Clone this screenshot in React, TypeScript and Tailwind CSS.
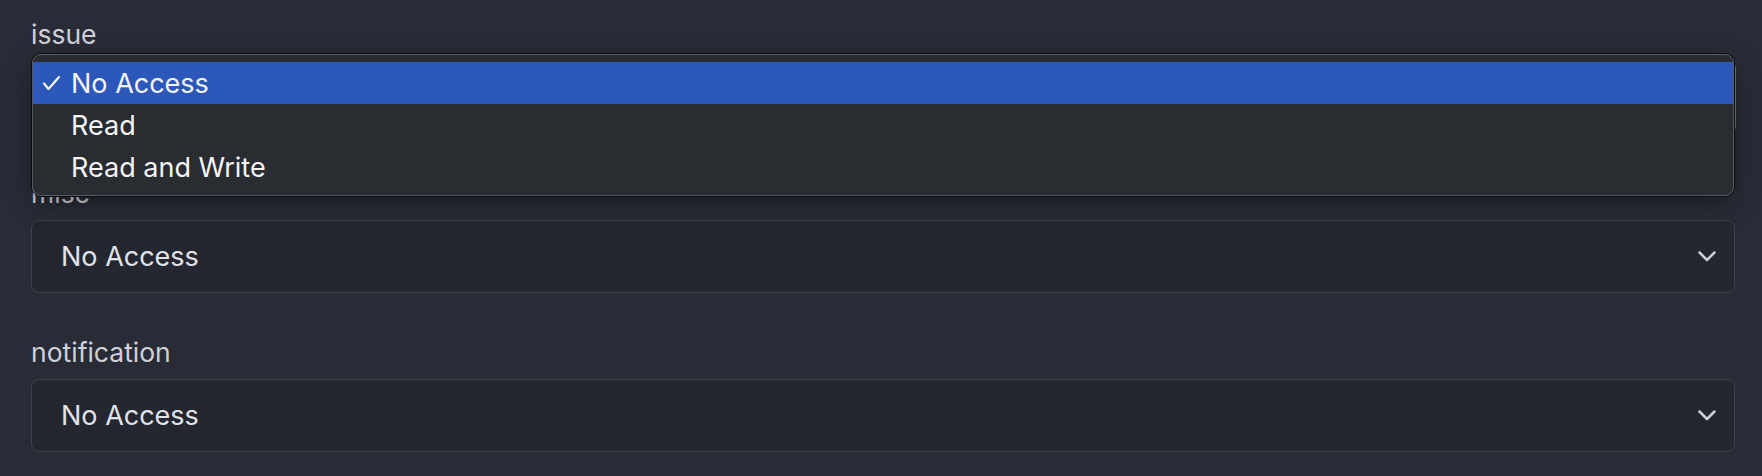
const fields = [
    {name: "issue", value: "No Access", open: true},
    {name: "misc", value: "No Access", open: false},
    {name: "notification", value: "No Access", open: false},
]

const options = ["No Access", "Read", "Read and Write"]

function Check() {
    return (
        <svg width="17" height="14" viewBox="0 0 17 14" fill="none">
            <path d="M1 7.5 L5.5 13 L16 1" stroke="#ffffff" strokeWidth="2" strokeLinecap="round" strokeLinejoin="round"/>
        </svg>
    )
}

function Chevron() {
    return (
        <svg width="18" height="11" viewBox="0 0 18 11" fill="none">
            <path d="M1.5 1.5 L9 9 L16.5 1.5" stroke="#cdd0d7" strokeWidth="2.5" strokeLinecap="round" strokeLinejoin="round"/>
        </svg>
    )
}

function Popup({selected}: {selected: string}) {
    return (
        <div className="absolute left-0 right-0 top-[40px] z-10 rounded-[10px] border border-[#0b0c0f] shadow-[0_8px_24px_rgba(0,0,0,0.35)]">
            <div className="rounded-[9px] border border-[#575a61] bg-[#292c31] py-[7px]">
                {options.map((opt, i) => {
                    const active = opt === selected;
                    return (
                        <div
                            key={`o_${i}`}
                            className={`flex h-[42px] items-center text-[27px] leading-none text-[#f4f4f5] ${active ? "bg-[#2c58b9]" : ""}`}
                        >
                            <span className="flex w-[38px] shrink-0 pl-[10px]">
                                {active && <Check/>}
                            </span>
                            <span>{opt}</span>
                        </div>
                    )
                })}
            </div>
        </div>
    )
}

export default function App() {
    return (
        <div className="min-h-screen bg-[#292c37] pl-[31px] pr-[27px] pt-[13px] font-['Inter',sans-serif]">
            <div className="flex flex-col gap-[38px]">
                {fields.map((field, i) => (
                    <div key={`f_${i}`} className="relative">
                        <div className="mb-[6px] h-[42px] text-[26.5px] leading-[42px] text-[#cfd2d9]">
                            {field.name}
                        </div>
                        <div
                            className={`flex h-[73px] items-center justify-between rounded-[8px] border border-[#3d414b] bg-[#242730] pl-[29px] pr-[18px] ${field.open ? "shadow-[1px_0_0_#6b8a3a]" : ""}`}
                        >
                            <span className="text-[27px] leading-none text-[#e1e3ea]">{field.value}</span>
                            <Chevron/>
                        </div>
                        {field.open && <Popup selected={field.value}/>}
                    </div>
                ))}
            </div>
        </div>
    );
}
